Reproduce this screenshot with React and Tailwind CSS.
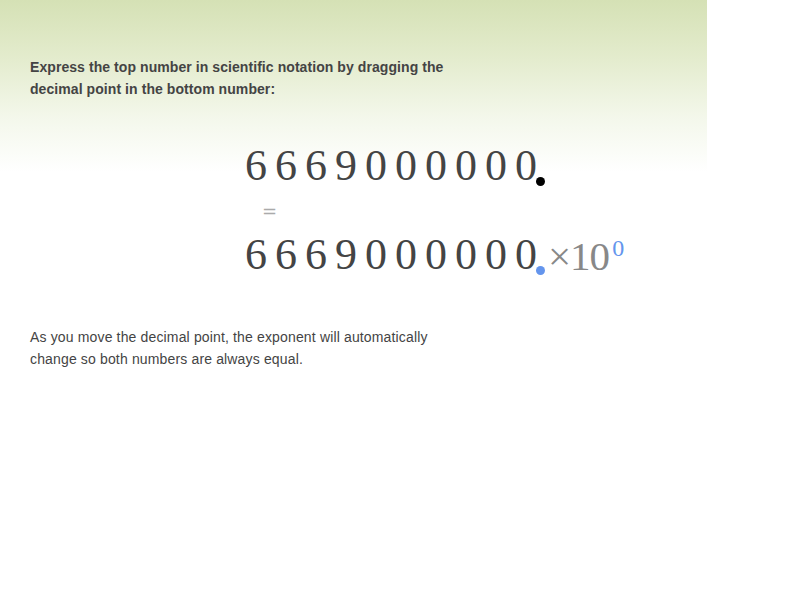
const digits = ["6", "6", "6", "9", "0", "0", "0", "0", "0", "0"];

function DigitRow({ dotClass, children }) {
  return (
    <div className="flex items-end h-[46px]">
      {digits.map((d, i) => (
        <span key={i} className="w-[30px] text-center leading-none">
          {d}
        </span>
      ))}
      <span className={`mb-[2px] ml-[-5px] h-[9px] w-[9px] rounded-full ${dotClass}`} />
      {children}
    </div>
  );
}

export default function App() {
  return (
    <div className="h-[600px] w-[800px] bg-white font-['Liberation_Sans',Arial,sans-serif] text-[#444]">
      <div className="w-[707px] bg-[linear-gradient(to_bottom,#d5e1b5_0px,#e4ecce_60px,#f3f7ea_115px,#ffffff_172px)] pt-[56px] pb-[40px]">
        <p className="ml-[30px] w-[440px] text-[14px] font-bold leading-[22px] tracking-[0.07px]">
          Express the top number in scientific notation by dragging the decimal point in the bottom
          number:
        </p>

        <div className="mt-[42px] ml-[241px] font-['Liberation_Serif','Times_New_Roman',serif] text-[44px] text-[#444]">
          <DigitRow dotClass="bg-black" />
          <div className="ml-[21px] mt-[14px] h-[29px] font-['DejaVu_Sans',sans-serif] text-[18px] leading-none text-[#aaa]">
            =
          </div>
          <DigitRow dotClass="bg-[#6495ed]">
            <span className="ml-[3px] text-[41px] leading-none tracking-[-1px] text-[#888]">
              ×10
            </span>
            <span className="mb-[17px] ml-[3px] text-[24px] leading-none text-[#6495ed]">0</span>
          </DigitRow>
        </div>

        <p className="mt-[49px] ml-[30px] w-[440px] text-[14px] leading-[22px] tracking-[0.15px]">
          As you move the decimal point, the exponent will automatically change so both numbers are
          always equal.
        </p>
      </div>
    </div>
  );
}
